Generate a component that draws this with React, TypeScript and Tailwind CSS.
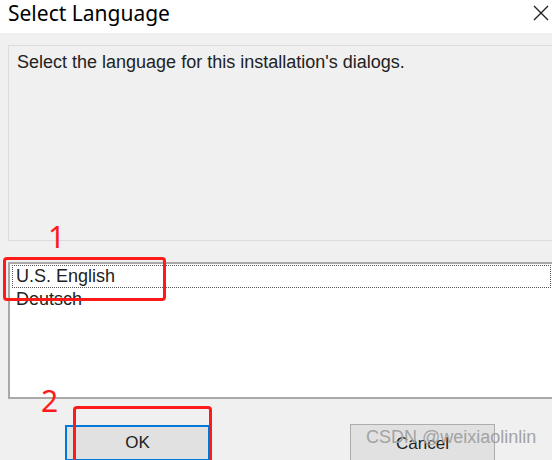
import React from "react";

export default function App() {
  return (
    <div className="relative w-[552px] h-[460px] overflow-hidden bg-[#f0f0f0] font-['Noto_Sans','Liberation_Sans',sans-serif] text-black">
      {/* title bar */}
      <div className="flex h-[33px] items-start justify-between bg-white pl-[8px] pr-[1px]">
        <span className="text-[21px] leading-[26px]">Select Language</span>
        <svg width="20" height="20" viewBox="0 0 20 20" className="mt-[3px]">
          <path d="M3 3 L17 17 M17 3 L3 17" stroke="#222" strokeWidth="1.4" />
        </svg>
      </div>

      <div className="flex flex-col pl-[8px]">
        {/* description panel */}
        <div className="mt-[12px] -mr-4 h-[196px] border border-[#dcdcdc] bg-[#f0f0f0] px-[8px] pt-[3px]">
          <p className="font-['Liberation_Sans',sans-serif] text-[18px] text-[#222]">
            Select the language for this installation's dialogs.
          </p>
        </div>

        {/* language list */}
        <div className="mt-[21px] -mr-[6px] h-[137px] border-t-2 border-l-2 border-b-2 border-[#a9a9a9] bg-white pt-[1px]">
          <div className="ml-[2px] mr-[7px] h-[23px] border border-dotted border-[#555] pl-[3px] font-['Liberation_Sans',sans-serif] text-[18px] leading-[21px] text-[#222]">
            U.S. English
          </div>
          <div className="pl-[6px] pt-[1px] font-['Liberation_Sans',sans-serif] text-[18px] leading-[20px] text-[#222]">
            Deutsch
          </div>
        </div>

        {/* buttons */}
        <div className="mt-[26px] flex gap-[140px] pl-[57px]">
          <button className="h-[36px] w-[145px] border-2 border-[#0078d7] bg-[#e1e1e1] font-['Liberation_Sans',sans-serif] text-[17px] text-[#222]">
            OK
          </button>
          <button className="-mt-[1px] h-[40px] w-[145px] border border-[#adadad] bg-[#e1e1e1] font-['Liberation_Sans',sans-serif] text-[17px] text-[#222]">
            Cancel
          </button>
        </div>
      </div>

      {/* annotations */}
      <div className="absolute left-[3px] top-[257px] h-[44px] w-[163px] rounded-[4px] border-[3px] border-[#ff1a1a]" />
      <div className="absolute left-[48px] top-[222px] text-[30px] leading-none text-[#ff1a1a]">1</div>
      <div className="absolute left-[73px] top-[406px] h-[60px] w-[139px] rounded-[4px] border-[3px] border-[#ff1a1a]" />
      <div className="absolute left-[41px] top-[386px] text-[30px] leading-none text-[#ff1a1a]">2</div>

      {/* watermark */}
      <div className="absolute left-[366px] top-[428px] font-['Liberation_Sans',sans-serif] text-[18px] leading-none text-[#a3a3a3]">
        CSDN @weixiaolinlin
      </div>
    </div>
  );
}
